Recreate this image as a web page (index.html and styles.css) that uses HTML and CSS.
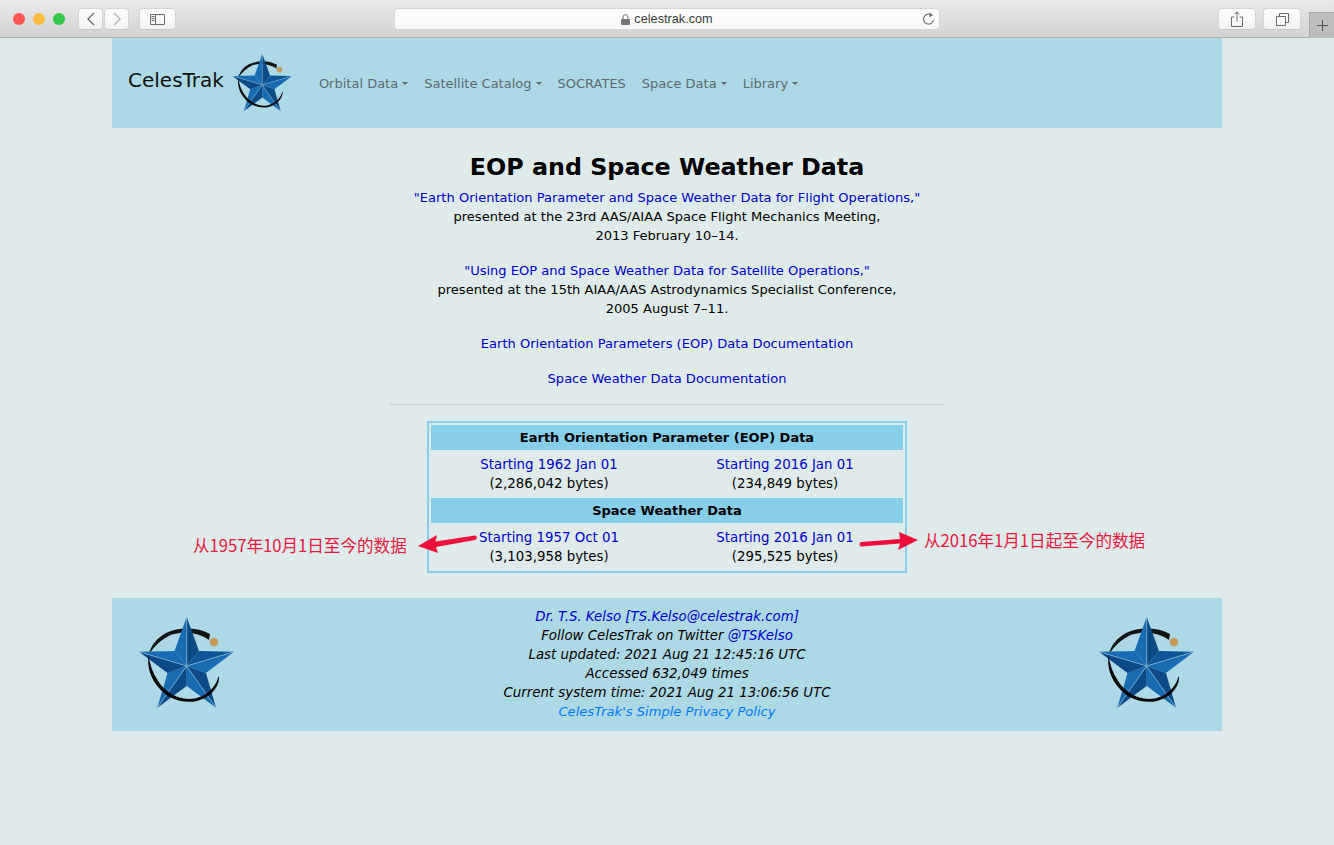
FILE: index.html
```html
<!DOCTYPE html>
<html lang="en">
<head>
    <meta charset="UTF-8">
    <meta name="viewport" content="width=device-width, initial-scale=1.0">
    <title>EOP and Space Weather Data</title>
    <link rel="stylesheet" href="styles.css">
</head>
<body>
    <svg class="defs" width="0" height="0" aria-hidden="true">
        <symbol id="star" viewBox="0 0 96 92">
            <path fill="#141414" d="M71 17C58 10 40 10 27 16C18 21 12 28 9.500 38C15 29 23 22 33 17.500C46 14 60 16 70 23Z"/>
            <circle cx="75" cy="25" r="4.2" fill="#c99a55"/>
            <polygon fill="#1a6cb2" points="47.7,0 35.500,34 47.7,49"/>
            <polygon fill="#0c4a85" points="47.7,0 60,34 47.7,49"/>
            <polygon fill="#0f5596" points="95,34.7 60,34 47.7,49"/>
            <polygon fill="#1a6cb2" points="95,34.7 67,56 47.7,49"/>
            <polygon fill="#0c4a85" points="77,90.7 67,56 47.7,49"/>
            <polygon fill="#1a6cb2" points="77,90.7 47.7,69 47.7,49"/>
            <polygon fill="#0c4a85" points="18.3,90.7 47.7,69 47.7,49"/>
            <polygon fill="#1a6cb2" points="18.3,90.7 28.500,56 47.7,49"/>
            <polygon fill="#0c4a85" points="0,34.7 28.500,56 47.7,49"/>
            <polygon fill="#1a6cb2" points="0,34.7 35.500,34 47.7,49"/>
            <path fill="none" stroke="#9cc4e0" stroke-width="0.6" d="M47.7 0V49M95 34.7L47.7 49M77 90.7L47.7 49M18.3 90.7L47.7 49M0 34.7L47.7 49"/>
            <path fill="#0a0a0a" d="M9.500 38C8 49 11 61 20 71C29 82 44 87 58 84C70 81 79 72 80 62C80.500 59.500 79 59 78.800 61.500C76 71 67 79 56 81.500C43 83.500 30 78 22 68C15 59 11 49 9.500 38Z"/>
        </symbol>
    </svg>

    <header class="browser-bar">
        <div class="lights">
            <span class="light red"></span>
            <span class="light yellow"></span>
            <span class="light green"></span>
        </div>
        <div class="nav-buttons">
            <button class="tool-btn narrow" aria-label="Back">
                <svg width="10" height="14" viewBox="0 0 10 14"><path d="M8 1L2 7l6 6" fill="none" stroke="#6c6c6c" stroke-width="1.4"/></svg>
            </button>
            <button class="tool-btn narrow" aria-label="Forward">
                <svg width="10" height="14" viewBox="0 0 10 14"><path d="M2 1l6 6-6 6" fill="none" stroke="#b5b5b5" stroke-width="1.4"/></svg>
            </button>
        </div>
        <button class="tool-btn sidebar-btn" aria-label="Sidebar">
            <svg width="15" height="11" viewBox="0 0 15 11"><path d="M.5.5h14v10H.5zM5.500.5v10M1.500 2.500h3M1.500 4.500h3M1.500 6.500h3" fill="none" stroke="#6c6c6c"/></svg>
        </button>
        <div class="url-bar">
            <svg class="lock" width="9" height="11" viewBox="0 0 9 11"><path d="M2 5V3.200a2.500 2.500 0 0 1 5 0V5" fill="none" stroke="#777" stroke-width="1"/><rect y="5" width="9" height="6" rx="1" fill="#777"/></svg>
            <span>celestrak.com</span>
            <svg class="reload" width="13" height="14" viewBox="0 0 13 14"><path d="M9.800 3.200A5 5 0 1 0 11.500 8" fill="none" stroke="#6c6c6c" stroke-width="1.100"/><path d="M7.500 .5l3.500 2.700-3.500 2z" fill="#6c6c6c"/></svg>
        </div>
        <button class="tool-btn share-btn" aria-label="Share">
            <svg width="12" height="16" viewBox="0 0 12 16"><path d="M3.500 6H.5v9.500h11V6h-3M6 10.500V1M3.500 3.300L6 .8l2.500 2.500" fill="none" stroke="#6c6c6c"/></svg>
        </button>
        <button class="tool-btn tabs-btn" aria-label="Tabs">
            <svg width="13" height="13" viewBox="0 0 13 13"><path d="M.5 3.500h9v9h-9zM3.500 3.500v-3h9v9h-3" fill="none" stroke="#6c6c6c"/></svg>
        </button>
        <div class="new-tab">
            <svg width="11" height="11" viewBox="0 0 11 11"><path d="M5.500 0v11M0 5.500h11" stroke="#555" stroke-width="1"/></svg>
        </div>
    </header>

    <div class="container">
        <nav class="navbar">
            <a class="brand" href="#">CelesTrak</a>
            <svg class="nav-star"><use href="#star"/></svg>
            <ul class="nav-links">
                <li class="caret">Orbital Data</li>
                <li class="caret">Satellite Catalog</li>
                <li>SOCRATES</li>
                <li class="caret">Space Data</li>
                <li class="caret">Library</li>
            </ul>
        </nav>

        <main class="content">
            <h1>EOP and Space Weather Data</h1>
            <p><a href="#">"Earth Orientation Parameter and Space Weather Data for Flight Operations,"</a><br>
            presented at the 23rd AAS/AIAA Space Flight Mechanics Meeting,<br>
            2013 February 10–14.</p>
            <p><a href="#">"Using EOP and Space Weather Data for Satellite Operations,"</a><br>
            presented at the 15th AIAA/AAS Astrodynamics Specialist Conference,<br>
            2005 August 7–11.</p>
            <p><a href="#">Earth Orientation Parameters (EOP) Data Documentation</a></p>
            <p><a href="#">Space Weather Data Documentation</a></p>
            <hr>

            <div class="data-wrap">
                <div class="data-table">
                    <div class="table-head">Earth Orientation Parameter (EOP) Data</div>
                    <div class="table-cell"><a href="#">Starting 1962 Jan 01</a><br>(2,286,042 bytes)</div>
                    <div class="table-cell"><a href="#">Starting 2016 Jan 01</a><br>(234,849 bytes)</div>
                    <div class="table-head">Space Weather Data</div>
                    <div class="table-cell"><a href="#">Starting 1957 Oct 01</a><br>(3,103,958 bytes)</div>
                    <div class="table-cell"><a href="#">Starting 2016 Jan 01</a><br>(295,525 bytes)</div>
                </div>

                <span class="note note-left">从1957年10月1日至今的数据</span>
                <svg class="arrow arrow-left" width="60" height="20" viewBox="0 0 60 20">
                    <path fill="#ee0f3c" d="M0 13L19 2L17.500 8.500L57 2.500C59.500 2.500 59.500 6.500 57 7L18 14L20 20Z"/>
                </svg>
                <span class="note note-right">从2016年1月1日起至今的数据</span>
                <svg class="arrow arrow-right" width="60" height="20" viewBox="0 0 60 20">
                    <path fill="#ee0f3c" d="M59 8L40 0L41 7L2 10C0 10.500 0 14.500 2 14.500L41 11.500L39 18Z"/>
                </svg>
            </div>
        </main>

        <footer class="footer">
            <svg class="footer-star"><use href="#star"/></svg>
            <div class="footer-text">
                <a href="#">Dr. T.S. Kelso [TS.Kelso@celestrak.com]</a><br>
                Follow CelesTrak on Twitter <a href="#">@TSKelso</a><br>
                Last updated: 2021 Aug 21 12:45:16 UTC<br>
                Accessed 632,049 times<br>
                Current system time: 2021 Aug 21 13:06:56 UTC<br>
                <a class="policy" href="#">CelesTrak's Simple Privacy Policy</a>
            </div>
            <svg class="footer-star"><use href="#star"/></svg>
        </footer>
    </div>
</body>
</html>
```

FILE: styles.css
```css
:root {
    --page-bg: #deebea;
    --bar-blue: #add8e6;
    --head-blue: #87ceeb;
    --link-blue: #0000cd;
}

* {
    box-sizing: border-box;
}

body {
    margin: 0;
    height: 845px;
    overflow: hidden;
    background: var(--page-bg);
    color: #000;
    font-family: "DejaVu Sans", Verdana, sans-serif;
    font-size: 13.33px;
    line-height: 19px;
}

a {
    color: var(--link-blue);
    text-decoration: none;
}

.defs {
    position: absolute;
}

/* browser window */
.browser-bar {
    height: 38px;
    display: flex;
    align-items: flex-start;
    padding-top: 8px;
    background: linear-gradient(#ebeaeb, #d3d2d3);
    border-bottom: 1px solid #b1b0b1;
    border-radius: 5px 5px 0 0;
}

.lights {
    display: flex;
    gap: 8px;
    margin: 5px 0 0 13px;
}

.light {
    width: 12px;
    height: 12px;
    border-radius: 50%;
}

.red { background: #fc5753; }
.yellow { background: #fdbc40; }
.green { background: #33c748; }

.tool-btn {
    height: 22px;
    padding: 0;
    display: flex;
    align-items: center;
    justify-content: center;
    background: linear-gradient(#fdfdfd, #f3f3f3);
    border: 1px solid #d6d5d6;
    border-bottom-color: #c6c5c6;
    border-radius: 4px;
}

.nav-buttons {
    display: flex;
    gap: 1px;
    margin-left: 13px;
}

.narrow {
    width: 25px;
}

.sidebar-btn {
    width: 37px;
    margin-left: 10px;
}

.url-bar {
    position: relative;
    width: 546px;
    height: 22px;
    margin-left: 218px;
    padding-top: 1px;
    display: flex;
    align-items: center;
    justify-content: center;
    gap: 4px;
    background: linear-gradient(#fefefe, #f8f8f8);
    border: 1px solid #d6d5d6;
    border-radius: 4px;
    color: #3c3c3c;
    font-family: "Liberation Sans", Arial, sans-serif;
    font-size: 12.7px;
}

.reload {
    position: absolute;
    right: 4px;
    top: 3px;
}

.share-btn {
    width: 38px;
    margin-left: 278px;
}

.tabs-btn {
    width: 38px;
    margin-left: 7px;
}

.new-tab {
    width: 25px;
    height: 26px;
    margin: 4px 0 0 8px;
    display: flex;
    align-items: center;
    justify-content: center;
    background: #bfbebf;
    border: 1px solid #a9a8a9;
    border-width: 1px 0 0 1px;
}

/* page */
.container {
    width: 1110px;
    margin: 0 auto;
}

.navbar {
    height: 90px;
    display: flex;
    align-items: center;
    padding-left: 16px;
    background: var(--bar-blue);
}

.brand {
    color: #111;
    font-size: 20px;
    margin-top: -5px;
}

.nav-star {
    width: 61px;
    height: 58px;
    margin: -1px 0 0 8px;
}

.nav-links {
    display: flex;
    gap: 16px;
    margin: 0 0 0 26px;
    padding: 0;
    list-style: none;
    color: #5c6a70;
    font-size: 13px;
}

.caret::after {
    content: "";
    display: inline-block;
    margin-left: 4px;
    vertical-align: 3px;
    border-top: 3px solid;
    border-left: 3px solid transparent;
    border-right: 3px solid transparent;
}

.content {
    height: 470px;
    padding-top: 24px;
    text-align: center;
}

.content h1 {
    margin: 0 0 5px;
    font-size: 23.8px;
    line-height: 31px;
    font-weight: bold;
}

.content p {
    margin: 0 0 16px;
    font-size: 13.05px;
}

.content hr {
    width: 554px;
    height: 1px;
    margin: 16px auto;
    border: 0;
    background: #c9cfcf;
}

.data-wrap {
    position: relative;
}

.data-table {
    width: 480px;
    height: 152px;
    margin: 0 auto;
    padding: 2px 2px 0;
    display: grid;
    grid-template-columns: 1fr 1fr;
    grid-template-rows: 25px 48px 25px 48px;
    border: 2px solid var(--head-blue);
}

.table-head {
    grid-column: 1 / 3;
    background: var(--head-blue);
    font-size: 13px;
    font-weight: bold;
    line-height: 26px;
}

.table-cell {
    padding-top: 5px;
}

.note {
    position: absolute;
    color: #e8173f;
    font-family: "Noto Sans CJK SC", sans-serif;
    font-size: 16.6px;
    line-height: 22px;
    white-space: nowrap;
}

.note-left {
    left: 81px;
    top: 113px;
}

.note-right {
    left: 812px;
    top: 108px;
}

.arrow {
    position: absolute;
}

.arrow-left {
    left: 306px;
    top: 112px;
}

.arrow-right {
    left: 747px;
    top: 111px;
}

.footer {
    height: 133px;
    display: flex;
    align-items: center;
    justify-content: space-between;
    padding: 0 27px;
    background: var(--bar-blue);
    font-style: italic;
    text-align: center;
}

.footer-star {
    width: 96px;
    height: 92px;
    margin-bottom: 3px;
}

.footer-text {
    margin-bottom: 1px;
}

.policy {
    color: #007bff;
    font-size: 13.1px;
}
```
